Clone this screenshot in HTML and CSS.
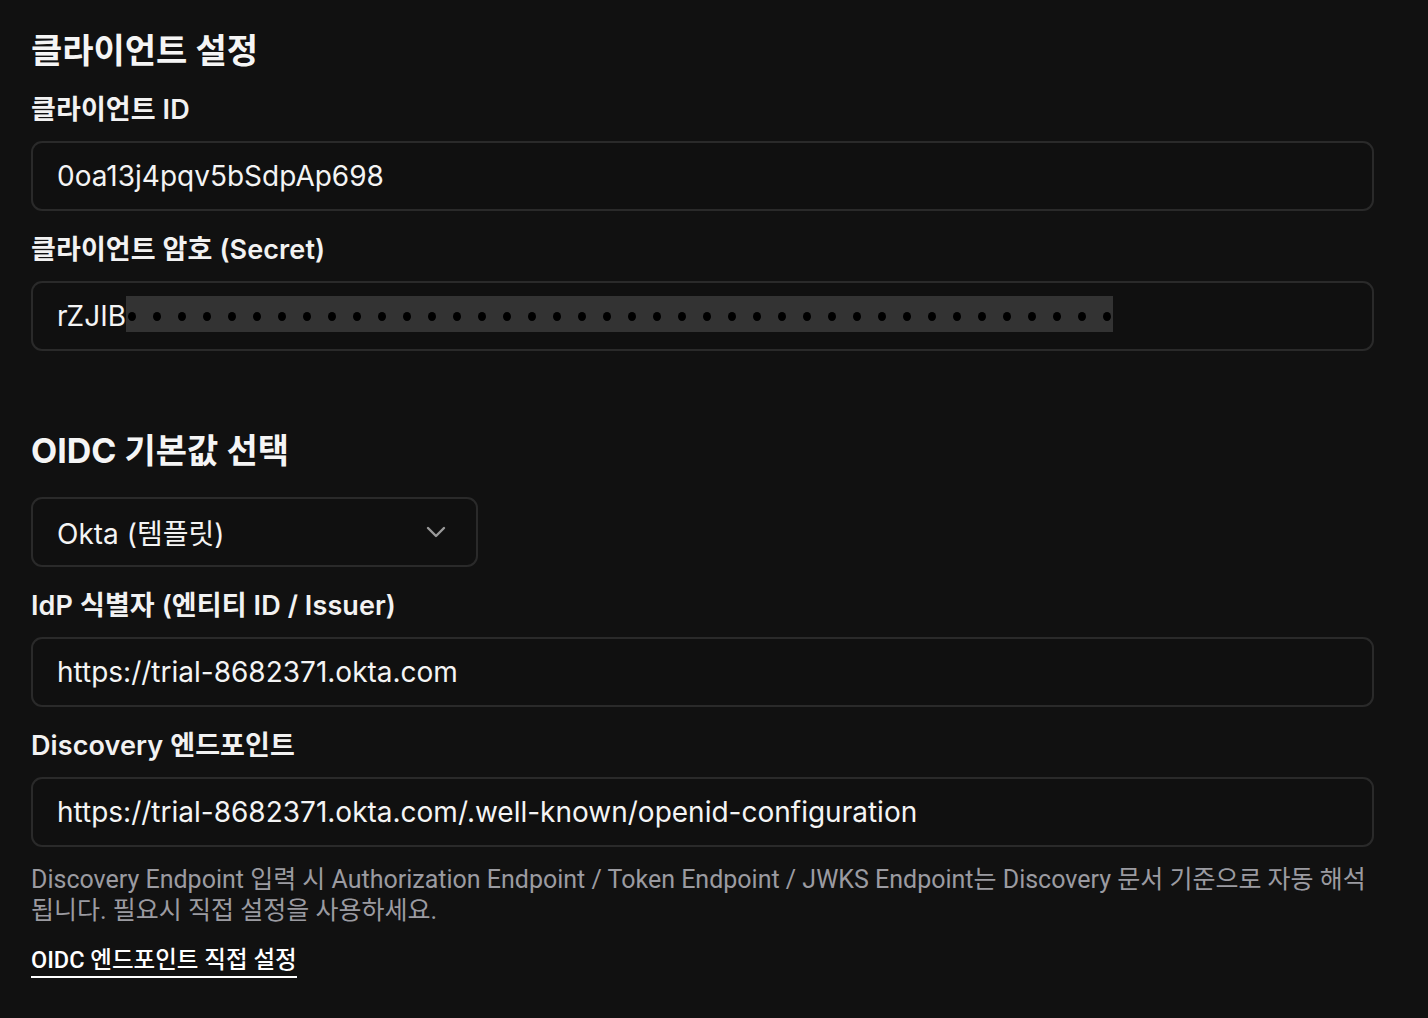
FILE: index.html
```html
<!DOCTYPE html>
<html lang="ko">
<head>
<meta charset="utf-8">
<title>클라이언트 설정</title>
<link rel="stylesheet" href="styles.css">
</head>
<body>
<main class="page">
  <section class="section">
    <h2 class="section-title">클라이언트 설정</h2>
    <div class="field">
      <label class="field-label">클라이언트 ID</label>
      <div class="input">0oa13j4pqv5bSdpAp698</div>
    </div>
    <div class="field">
      <label class="field-label">클라이언트 암호 (Secret)</label>
      <div class="input">rZJIB<span class="mask"><i></i><i></i><i></i><i></i><i></i><i></i><i></i><i></i><i></i><i></i><i></i><i></i><i></i><i></i><i></i><i></i><i></i><i></i><i></i><i></i><i></i><i></i><i></i><i></i><i></i><i></i><i></i><i></i><i></i><i></i><i></i><i></i><i></i><i></i><i></i><i></i><i></i><i></i><i></i><i></i></span></div>
    </div>
  </section>

  <section class="section section-oidc">
    <h2 class="section-title">OIDC 기본값 선택</h2>
    <div class="select">
      <span>Okta (템플릿)</span>
      <svg class="chevron" width="20" height="12" viewBox="0 0 20 12" aria-hidden="true"><path d="M2 2 L10 10 L18 2" fill="none" stroke="#9a9a9a" stroke-width="2.4" stroke-linecap="round" stroke-linejoin="round"/></svg>
    </div>
    <div class="field">
      <label class="field-label">IdP 식별자 (엔티티 ID / Issuer)</label>
      <div class="input">https://trial-8682371.okta.com</div>
    </div>
    <div class="field">
      <label class="field-label">Discovery 엔드포인트</label>
      <div class="input">https://trial-8682371.okta.com/.well-known/openid-configuration</div>
    </div>
    <p class="help">Discovery Endpoint 입력 시 Authorization Endpoint / Token Endpoint / JWKS Endpoint는 Discovery 문서 기준으로 자동 해석 됩니다. 필요시 직접 설정을 사용하세요.</p>
    <a class="link" href="#">OIDC 엔드포인트 직접 설정</a>
  </section>
</main>
</body>
</html>
```

FILE: styles.css
```css
* { box-sizing: border-box; }

html, body {
  margin: 0;
  background: #111111;
  color: #f2f2f2;
  font-family: Inter, "Noto Sans CJK KR", sans-serif;
}

.page {
  width: 1343px;
  margin-left: 31px;
  padding-top: 31px;
}

.section-title {
  margin: 0;
  font-size: 34px;
  line-height: 40px;
  font-weight: 700;
  letter-spacing: 0;
  color: #f5f5f5;
}

.section-oidc {
  margin-top: 80px;
}

.field {
  display: flex;
  flex-direction: column;
  margin-top: 22px;
}

.section-title + .field {
  margin-top: 22px;
}

.field-label {
  font-size: 27px;
  line-height: 34px;
  font-weight: 600;
  letter-spacing: 0.1px;
  margin-bottom: 14px;
  color: #f2f2f2;
}

.input {
  height: 70px;
  border: 2px solid #2a2a2a;
  border-radius: 11px;
  background: #101010;
  padding: 0 24px;
  display: flex;
  align-items: center;
  font-size: 28px;
  color: #f4f4f4;
}

.mask {
  display: inline-flex;
  align-items: center;
  gap: 17px;
  height: 36px;
  padding: 0 2px;
  background: #333333;
  margin-top: -4px;
}

.mask i {
  display: block;
  width: 8px;
  height: 9px;
  border-radius: 50%;
  background: #000;
  margin-top: 4px;
}

.select {
  margin-top: 26px;
  width: 447px;
  height: 70px;
  border: 2px solid #2a2a2a;
  border-radius: 11px;
  background: #101010;
  padding: 0 30px 0 24px;
  display: flex;
  align-items: center;
  justify-content: space-between;
  font-size: 28px;
  color: #f4f4f4;
}

.chevron {
  display: block;
}

.help {
  margin: 17px 0 0;
  font-family: Roboto, "Noto Sans CJK KR", sans-serif;
  font-size: 25px;
  line-height: 31px;
  color: #9b9ba1;
}

.link {
  display: inline-block;
  margin-top: 21px;
  font-family: Roboto, "Noto Sans CJK KR", sans-serif;
  font-size: 23.5px;
  line-height: 26px;
  font-weight: 500;
  color: #ffffff;
  text-decoration: none;
  border-bottom: 2px solid #ffffff;
  padding-bottom: 3px;
}
```
